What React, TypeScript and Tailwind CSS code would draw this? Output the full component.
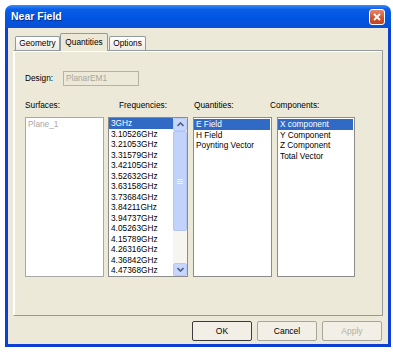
import React from "react";

const freqs = Array.from({ length: 16 }, (_, k) =>
  k === 0 ? "3GHz" : (3 + (2 * k) / 19).toFixed(5) + "GHz"
);

const quantities = ["E Field", "H Field", "Poynting Vector"];
const components = ["X component", "Y Component", "Z Component", "Total Vector"];

function ListItem({ text, selected }: { text: string; selected?: boolean }) {
  return (
    <div
      className={
        "h-[10.5px] leading-[10.5px] pl-[2px] whitespace-nowrap " +
        (selected ? "bg-[#316ac5] text-white" : "text-black")
      }
    >
      {text}
    </div>
  );
}

function Chevron({ up }: { up?: boolean }) {
  return (
    <svg width="7" height="5" viewBox="0 0 7 5">
      <path
        d={up ? "M0.5 4 L3.5 1 L6.5 4" : "M0.5 1 L3.5 4 L6.5 1"}
        fill="none"
        stroke="#4d6185"
        strokeWidth="1.6"
      />
    </svg>
  );
}

function Button({ label, main, disabled }: { label: string; main?: boolean; disabled?: boolean }) {
  return (
    <div
      className={
        "w-[60px] h-[20px] flex items-center justify-center rounded-[2px] bg-[#f1efe6] text-[8.5px] " +
        (main ? "border border-[#3c3c3c] " : "border border-[#a7a69c] ") +
        (disabled ? "text-[#b2b1a5]" : "text-black")
      }
    >
      {label}
    </div>
  );
}

export default function App() {
  return (
    <div className="w-[393px] h-[352px] bg-white pl-[5px] pt-[5px] font-['Liberation_Sans',Arial,sans-serif]">
      <div className="w-[386px] h-[342px] flex flex-col">
        {/* title bar */}
        <div className="h-[23px] rounded-t-[7px] bg-[linear-gradient(to_bottom,#3b8cf8_0%,#0a5fe8_18%,#0055e2_55%,#0a4fd6_100%)] flex items-center justify-between pl-[6px] pr-[6px]">
          <span className="text-white font-bold text-[10.5px] [text-shadow:1px_1px_0_#0a2a8a]">Near Field</span>
          <div className="w-[16px] h-[16px] rounded-[3px] border border-white bg-[linear-gradient(to_bottom,#e8876a,#d0502a_60%,#c4441e)] flex items-center justify-center">
            <svg width="8" height="8" viewBox="0 0 8 8">
              <path d="M1 1 L7 7 M7 1 L1 7" stroke="white" strokeWidth="1.8" />
            </svg>
          </div>
        </div>

        {/* body */}
        <div className="flex-1 bg-[#ece9d8] border-x-[3px] border-b-[3px] border-[#0b3fd5] flex flex-col pl-[5px] pt-[5px] pb-[3px]">
          {/* tabs */}
          <div className="h-[17px] flex items-end pl-[2px] text-[8.3px] text-black">
            <div className="w-[45px] h-[14px] border border-b-0 border-[#919b9c] rounded-t-[2px] bg-[linear-gradient(to_bottom,#ffffff,#ecebe5)] flex items-center justify-center">
              Geometry
            </div>
            <div className="w-[48px] h-[18px] -mb-[1px] border border-b-0 border-[#919b9c] rounded-t-[2px] bg-[#ece9d8] flex items-start pt-[2px] justify-center z-10">
              Quantities
            </div>
            <div className="w-[37px] h-[14px] ml-[1px] border border-b-0 border-[#919b9c] rounded-t-[2px] bg-[linear-gradient(to_bottom,#ffffff,#ecebe5)] flex items-center justify-center">
              Options
            </div>
          </div>

          {/* panel */}
          <div className="w-[370px] h-[266px] border border-[#919b9c] border-l-white border-t-[#919b9c] shadow-[inset_1px_1px_0_#fff] pl-[11px] pt-[20px] text-[8.3px] text-black">
            <div className="h-[15px] flex items-center">
              <span className="w-[38px]">Design:</span>
              <div className="w-[76px] h-[15px] border border-[#b5b3a8] bg-[#ece9d8] text-[#a8a79c] pl-[2px] flex items-center">
                PlanarEM1
              </div>
            </div>

            <div className="mt-[14px] h-[11px] flex items-center">
              <span className="w-[94px]">Surfaces:</span>
              <span className="w-[75px]">Frequencies:</span>
              <span className="w-[76px]">Quantities:</span>
              <span>Components:</span>
            </div>

            <div className="mt-[6px] h-[160px] flex">
              <div className="w-[79px] h-full border border-[#a9a9a9] bg-white pt-[1px] text-[#a8a8a8]">
                <div className="pl-[2px] h-[10.5px] leading-[10.5px]">Plane_1</div>
              </div>

              <div className="ml-[4px] w-[80px] h-full border border-[#8c8c8c] bg-white flex overflow-hidden">
                <div className="flex-1 overflow-hidden">
                  {freqs.map((f, i) => (
                    <ListItem key={f} text={f} selected={i === 0} />
                  ))}
                </div>
                <div className="w-[14px] h-full flex flex-col bg-[#f6f5ef]">
                  <div className="h-[13px] rounded-[2px] border border-[#b6c9f7] bg-[#c6d6fc] flex items-center justify-center">
                    <Chevron up />
                  </div>
                  <div className="h-[100px] rounded-[2px] border border-[#b3c5f3] bg-[#c2d3fb] flex items-center justify-center">
                    <div className="w-[6px] flex flex-col gap-[1px]">
                      <div className="h-[1px] bg-[#eef3fe]" />
                      <div className="h-[1px] bg-[#eef3fe]" />
                      <div className="h-[1px] bg-[#eef3fe]" />
                    </div>
                  </div>
                  <div className="flex-1" />
                  <div className="h-[13px] rounded-[2px] border border-[#b6c9f7] bg-[#c6d6fc] flex items-center justify-center">
                    <Chevron />
                  </div>
                </div>
              </div>

              <div className="ml-[5px] w-[79px] h-full border border-[#8c8c8c] bg-white pt-[1px] pr-[1px]">
                {quantities.map((q, i) => (
                  <ListItem key={q} text={q} selected={i === 0} />
                ))}
              </div>

              <div className="ml-[5px] w-[78px] h-full border border-[#8c8c8c] bg-white pt-[1px] pr-[1px]">
                {components.map((c, i) => (
                  <ListItem key={c} text={c} selected={i === 0} />
                ))}
              </div>
            </div>
          </div>

          {/* buttons */}
          <div className="mt-[5px] h-[20px] w-[370px] flex justify-end gap-[5px] pr-[1px]">
            <Button label="OK" main />
            <Button label="Cancel" />
            <Button label="Apply" disabled />
          </div>
        </div>
      </div>
    </div>
  );
}
